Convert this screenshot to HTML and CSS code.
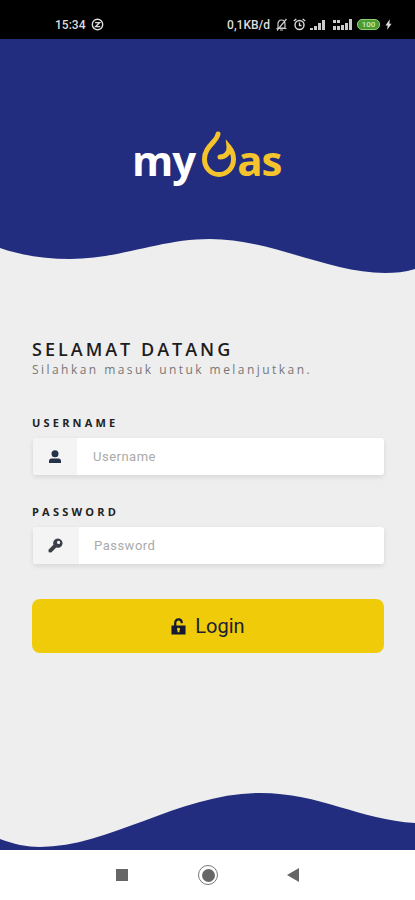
FILE: index.html
```html
<!DOCTYPE HTML>
<html>

<head>
    <meta charset="utf-8">
    <title>myGas</title>
    <meta name="viewport" content="width=device-width,initial-scale=1">
    <link rel="stylesheet" href="styles.css">
</head>

<body>
    <div class="status-bar">
        <div class="status-left">
            <span>15:34</span>
            <svg class="status-sync" viewBox="0 0 12 12"><circle cx="6" cy="6" r="4.800" fill="none" stroke="#ddd" stroke-width="1.300"/><path d="M3.800 4.200h4.200L4.200 8h4.200" fill="none" stroke="#ddd" stroke-width="1.200"/></svg>
        </div>
        <div class="status-right">
            <span>0,1KB/d</span>
            <svg class="status-mute" viewBox="0 0 13 13"><path d="M3 10V6C3 3.500 4.500 2 6.500 2S10 3.500 10 6v4zM1.500 10.500h10M5 12h3M2 12.500 11.500 1" fill="none" stroke="#ccc" stroke-width="1.200"/></svg>
            <svg class="status-alarm" viewBox="0 0 13 13"><circle cx="6.500" cy="7" r="4.500" fill="none" stroke="#ddd" stroke-width="1.400"/><path d="M6.500 4.500V7.500h2M.8 3 3.300 1M12.200 3 9.700 1" fill="none" stroke="#ddd" stroke-width="1.300"/></svg>
            <svg class="status-signal" viewBox="0 0 16 10"><path d="M0 8h3v2H0zM4 6h3v4H4zM8 3h3v7H8zM12 0h3v10h-3z" fill="#ccc"/></svg>
            <svg class="status-signal-two" viewBox="0 0 20 11"><path d="M0 1h3v3H0zM4 1h3v3H4zM0 7h3v4H0zM4 7h3v4H4zM8 6h3v5H8zM12 4h3v7h-3zM16 0h3v11h-3z" fill="#ccc"/></svg>
            <span class="status-battery">100</span>
            <svg class="status-bolt" viewBox="0 0 8 12"><path d="M5.500 0 .5 7h2.500L2.500 12 7.500 5H5z" fill="#ddd"/></svg>
        </div>
    </div>

    <div class="hero">
        <svg class="hero-wave" viewBox="0 0 415 236" preserveAspectRatio="none"><path d="M0 0H415V230C405 233 395 234 385 234C330 234 270 200 210 200C160 200 120 220 70 220C45 220 20 216 0 209Z" fill="#222d7f"/></svg>
        <div class="logo">
            <span class="logo-my">my</span>
            <svg class="logo-flame" viewBox="0 0 38 48"><path d="M18 4C17 12 4.500 16 4.500 29C4.500 38 11 44.500 19 44.500C27 44.500 33.500 38 33.500 29C33.500 24 31.500 20 29 17C29.500 22 26 27 20 27" fill="none" stroke="#f5c32c" stroke-width="5" stroke-linecap="round"/></svg>
            <span class="logo-as">as</span>
        </div>
    </div>

    <div class="content">
        <h1 class="title">SELAMAT DATANG</h1>
        <p class="subtitle">Silahkan masuk untuk melanjutkan.</p>

        <label class="field-label">USERNAME</label>
        <div class="field">
            <div class="field-addon">
                <svg class="field-icon" viewBox="0 0 14 14"><circle cx="7" cy="3.800" r="3.500" fill="#24324a"/><path d="M1 13V11C1 9.500 2 8.500 3.500 8.500H10.500C12 8.500 13 9.500 13 11V13Z" fill="#24324a"/></svg>
            </div>
            <span class="field-input">Username</span>
        </div>

        <label class="field-label">PASSWORD</label>
        <div class="field">
            <div class="field-addon field-addon-wide">
                <svg class="field-key" viewBox="0 0 16 16"><path d="M10.500.5A5 5 0 1 1 8.800 10.200L3.500 15.500 .7 15.300.5 12.500 5.800 7.200A5 5 0 0 1 10.500.5ZM11.300 3A1.700 1.700 0 1 0 11.300 6.400 1.700 1.700 0 0 0 11.300 3Z" fill="#3a3f48" fill-rule="evenodd"/></svg>
            </div>
            <span class="field-input field-input-pass">Password</span>
        </div>

        <button class="login-btn">
            <svg class="login-icon" viewBox="0 0 16 18"><path d="M4.500 9V5.200C4.500 3 6 1.400 8 1.400S11.500 3 11.500 5.500" fill="none" stroke="#141a33" stroke-width="2.400"/><path d="M.5 8H15.500V17.500H.5ZM8 10.300A1.600 1.600 0 0 0 7 13.200V15H9V13.200A1.600 1.600 0 0 0 8 10.300Z" fill="#141a33" fill-rule="evenodd"/></svg>
            <span>Login</span>
        </button>
    </div>

    <svg class="foot-wave" viewBox="0 0 415 57" preserveAspectRatio="none"><path d="M0 46C13 51 27 54 40 54C110 54 180 0 260 0C320 0 360 27 415 30V57H0Z" fill="#222d7f"/></svg>

    <div class="nav-bar">
        <span class="nav-square"></span>
        <span class="nav-home"><span class="nav-home-dot"></span></span>
        <svg class="nav-back" viewBox="0 0 12 14"><path d="M12 0V14L0 7Z" fill="#666"/></svg>
    </div>
</body>

</html>
```

FILE: styles.css
```css
html, body {
    background: #eeeeee;
    padding: 0;
    border: 0;
    margin: 0;
    height: 100%;
}

body {
    display: flex;
    flex-direction: column;
    height: 900px;
    overflow: hidden;
    font-family: "Open Sans", sans-serif;
}

/* status bar */
.status-bar {
    height: 39px;
    flex: none;
    background: #000;
    color: #ddd;
    display: flex;
    justify-content: space-between;
    align-items: center;
    padding: 10px 23px 0 55px;
    box-sizing: border-box;
    font-family: Roboto, sans-serif;
    font-size: 12px;
    font-weight: 500;
}

.status-left,
.status-right {
    display: flex;
    align-items: center;
}

.status-sync {
    width: 13px;
    height: 13px;
    margin-left: 6px;
}

.status-mute {
    width: 13px;
    height: 13px;
    margin-left: 5px;
}

.status-alarm {
    width: 13px;
    height: 13px;
    margin-left: 5px;
}

.status-signal {
    width: 16px;
    height: 10px;
    margin-left: 4px;
}

.status-signal-two {
    width: 20px;
    height: 11px;
    margin-left: 7px;
}

.status-battery {
    width: 23px;
    height: 11px;
    margin-left: 4px;
    box-sizing: border-box;
    border: 1px solid #8fd06a;
    border-radius: 5px;
    background: #4c9a34;
    color: #d2ecb6;
    font-size: 8px;
    line-height: 9px;
    text-align: center;
}

.status-bolt {
    width: 7px;
    height: 11px;
    margin-left: 5px;
}

/* header */
.hero {
    position: relative;
    height: 236px;
    flex: none;
}

.hero-wave {
    display: block;
    width: 100%;
    height: 100%;
}

.logo {
    position: absolute;
    top: 91px;
    left: 132px;
    display: flex;
    align-items: flex-start;
    font-family: "Open Sans", sans-serif;
    font-weight: 700;
    font-size: 42px;
    line-height: 48px;
    letter-spacing: -1px;
}

.logo-my,
.logo-as {
    margin-top: 6px;
}

.logo-my {
    color: #fff;
}

.logo-as {
    color: #f5c32c;
    margin-left: -1px;
}

.logo-flame {
    width: 38px;
    height: 48px;
    margin-left: 5px;
}

/* form */
.content {
    flex: 1;
    padding: 62px 31px 0 32px;
}

.title {
    margin: 0;
    font-size: 18px;
    line-height: 24px;
    font-weight: 600;
    letter-spacing: 3px;
    color: #1d1d1f;
}

.subtitle {
    margin: 0 0 36px;
    font-size: 12px;
    line-height: 18px;
    letter-spacing: 2.450px;
    color: #777;
}

.field-label {
    display: block;
    margin-bottom: 7px;
    font-size: 11px;
    line-height: 16px;
    font-weight: 700;
    letter-spacing: 3.200px;
    color: #222;
}

.field {
    display: flex;
    height: 37px;
    margin: 0 0 29px 1px;
    background: #fff;
    border-radius: 3px;
    box-shadow: 0 2px 5px rgba(0, 0, 0, 0.1);
    overflow: hidden;
}

.field-addon {
    width: 44px;
    display: flex;
    align-items: center;
    justify-content: center;
    background: #f4f4f4;
}

.field-addon-wide {
    width: 46px;
}

.field-icon {
    width: 14px;
    height: 14px;
}

.field-key {
    width: 15px;
    height: 15px;
    margin-right: 2px;
}

.field-input {
    padding-left: 16px;
    line-height: 37px;
    font-family: Roboto, sans-serif;
    font-size: 13px;
    letter-spacing: 0.500px;
    color: #aaa;
}

.field-input-pass {
    padding-left: 15px;
}

.login-btn {
    display: flex;
    align-items: center;
    justify-content: center;
    gap: 9px;
    width: 100%;
    height: 54px;
    margin-top: 35px;
    border: 0;
    border-radius: 8px;
    background: #f0cb09;
    color: #1a2036;
    font-family: Roboto, sans-serif;
    font-size: 20px;
}

.login-icon {
    width: 15px;
    height: 17px;
}

/* bottom */
.foot-wave {
    display: block;
    flex: none;
    width: 100%;
    height: 57px;
}

.nav-bar {
    height: 50px;
    flex: none;
    background: #fff;
    display: flex;
    align-items: center;
    padding-left: 116px;
}

.nav-square {
    width: 12px;
    height: 12px;
    background: #666;
    margin-right: 70px;
}

.nav-home {
    width: 18px;
    height: 18px;
    border: 1px solid #777;
    border-radius: 50%;
    display: flex;
    align-items: center;
    justify-content: center;
    margin-right: 69px;
}

.nav-home-dot {
    width: 13px;
    height: 13px;
    border-radius: 50%;
    background: #666;
}

.nav-back {
    width: 12px;
    height: 14px;
}
```
